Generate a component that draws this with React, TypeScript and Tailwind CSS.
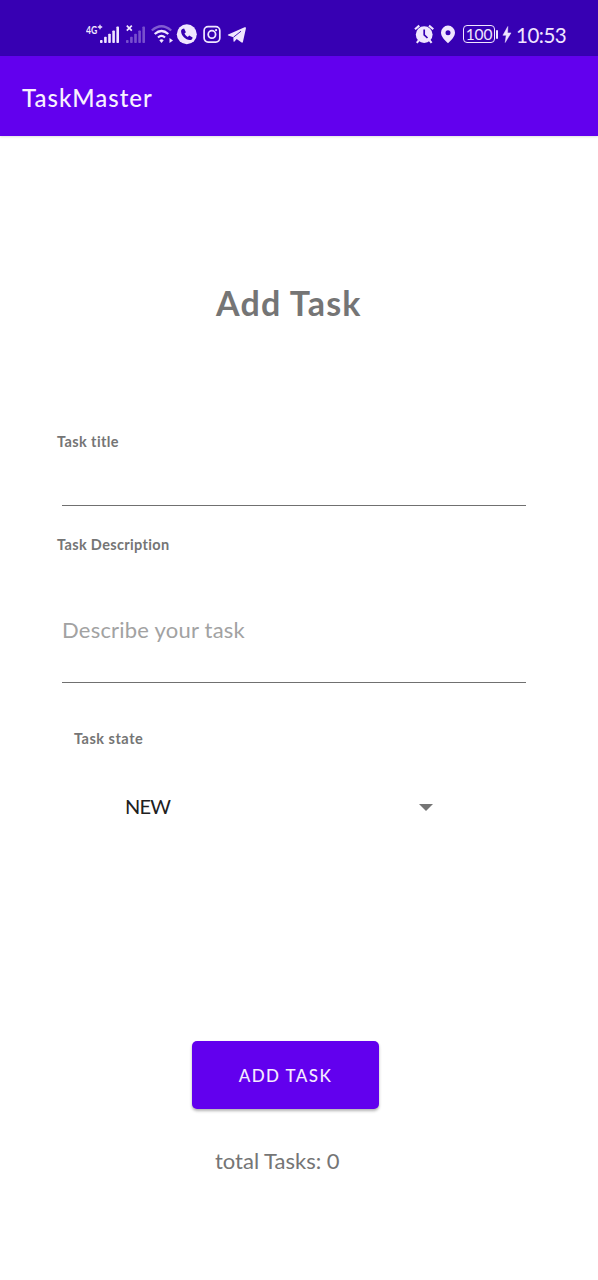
import React from 'react';

const ink = '#f0e6ff';

function SignalBars({ dim }: { dim?: boolean }) {
  return (
    <g fill={ink} opacity={dim ? 0.35 : 1}>
      <rect x="0" y="14" width="2.6" height="3" rx="0.8" />
      <rect x="4.1" y="10.5" width="2.6" height="6.5" rx="0.8" />
      <rect x="8.2" y="7.5" width="2.6" height="9.5" rx="0.8" />
      <rect x="12.3" y="4" width="2.6" height="13" rx="0.8" />
      <rect x="16.4" y="0" width="2.6" height="17" rx="0.8" />
    </g>
  );
}

function StatusBar() {
  return (
    <div className="flex h-14 w-full shrink-0 bg-[#3700b3] pt-[22px]">
      <div className="ml-[86px] flex h-6 w-[33px] shrink-0">
        <span className="h-3 w-[12px] shrink-0 origin-left scale-x-[0.82] pt-[2px] text-[10.5px] leading-[12px] font-bold whitespace-nowrap text-[#f0e6ff]">4G</span>
        <svg className="-ml-[12px] h-6 w-[33px] shrink-0" viewBox="0 0 33 24">
          <path d="M11.8 5h4.4M14 2.8v4.4" stroke={ink} strokeWidth="1.3" />
          <g transform="translate(14 4.5) scale(1 0.97)"><SignalBars /></g>
        </svg>
      </div>
      <svg className="ml-[6px] h-6 w-[21px] shrink-0" viewBox="0 0 21 24">
        <path d="M1.8 3.6l5 5M6.8 3.6l-5 5" stroke={ink} strokeWidth="1.7" />
        <g transform="translate(1 4.5) scale(1 0.97)"><SignalBars dim /></g>
      </svg>
      <svg className="ml-[4px] h-6 w-[25px] shrink-0" viewBox="0 0 25 24" fill="none">
        <path d="M1.8 8.5Q11.5 0 21.2 8.5" stroke={ink} strokeWidth="2.3" opacity="0.4" />
        <path d="M4.7 12Q11.5 6 18.3 12" stroke={ink} strokeWidth="2.2" />
        <path d="M8 15.5Q11.5 12.4 15 15.5" stroke={ink} strokeWidth="2.2" />
        <path d="M9.3 18.2Q11.5 16.4 13.7 18.2L11.5 21z" fill={ink} />
        <path d="M19.5 16v5l3.5-2.500z" fill={ink} />
      </svg>
      <svg className="h-6 w-[22px] shrink-0" viewBox="0 0 22 24">
        <circle cx="11.800" cy="12.3" r="10" fill={ink} />
        <path d="M7.4 7.1l1.7-.5 1.8 3.6-1.4 1.3c.7 1.6 1.8 2.7 3.3 3.5l1.4-1.4 3.4 1.9c-.2 1.8-1.4 2.7-2.8 2.6-4.400-.4-8.300-4.400-8.700-8.400-.1-1.200.4-2.100 1.300-2.600z" fill="#3700b3" />
      </svg>
      <svg className="ml-[6px] h-6 w-[18px] shrink-0" viewBox="0 0 18 24" fill="none" stroke={ink}>
        <rect x="1.1" y="4.7" width="15.7" height="15.4" rx="4" strokeWidth="1.7" />
        <circle cx="8.9" cy="12.4" r="3.7" strokeWidth="1.8" />
        <circle cx="13.1" cy="8.2" r="1.1" fill={ink} stroke="none" />
      </svg>
      <svg className="ml-[6px] h-6 w-[20px] shrink-0" viewBox="0 0 20 24">
        <path d="M1.2 12.600L17.600 5.300Q19.300 4.700 18.900 6.600L15.900 19.900Q15.500 21.200 14.200 20.300L9.700 17.100 7.500 19.500Q6.600 20.200 6.500 18.900L6.300 15.300 1.200 13.600Q.2 13.100 1.200 12.600z" fill={ink} />
        <path d="M6.500 15.200L14 9.200" stroke="#3700b3" strokeWidth="0.9" fill="none" />
      </svg>
      <svg className="ml-[167px] h-6 w-[20px] shrink-0" viewBox="0 0 20 24" fill="none">
        <circle cx="10.200" cy="12.600" r="8.400" fill={ink} />
        <path d="M1 7.300L5.300 3.600M19.300 7.300L15 3.600M4.800 18.400l-2 2.400M15.600 18.400l2 2.400" stroke={ink} strokeWidth="2.100" />
        <path d="M10.200 7.600v5.200l3.300 3.200" stroke="#3700b3" strokeWidth="1.700" />
      </svg>
      <svg className="ml-[6px] h-6 w-[16px] shrink-0" viewBox="0 0 16 24">
        <path fillRule="evenodd" d="M8 3.600a7 7 0 0 1 7 7c0 4-3.500 7.500-7 10.700C4.500 18.100 1 14.600 1 10.600a7 7 0 0 1 7-7zm0 4.700a2.500 2.500 0 1 0 0 5 2.500 2.500 0 0 0 0-5z" fill={ink} />
      </svg>
      <div className="mt-[3px] ml-[7px] flex h-[18px] w-[32px] shrink-0 items-center justify-center rounded-[4px] border-[1.5px] border-[#f0e6ff] text-[15.5px] leading-[15px] tracking-[-0.2px] text-[#f0e6ff]">
        100
      </div>
      <div className="mt-[8px] ml-[1px] h-[9px] w-[2px] shrink-0 rounded-sm bg-[#f0e6ff]" />
      <svg className="ml-[4px] h-6 w-[10px] shrink-0" viewBox="0 0 10 24">
        <path d="M5.800 4.500L.9 13.300h3.300L3.200 20.500 9 10.900H5.600z" fill={ink} stroke={ink} strokeWidth="0.500" />
      </svg>
      <span className="ml-[4px] h-6 text-[20.500px] leading-[27px] tracking-[-0.5px] whitespace-nowrap text-[#f0e6ff]">10:53</span>
    </div>
  );
}

export default function App() {
  return (
    <div className="flex h-[1280px] w-[598px] flex-col overflow-hidden bg-white font-[Lato,sans-serif] text-[#757575]">
      <StatusBar />
      <header className="flex h-20 w-full shrink-0 items-center bg-[#6200ee] pl-[22px] shadow-[0_1px_2px_rgba(0,0,0,0.12)]">
        <h1 className="pt-[3px] text-[24px] leading-8 font-medium tracking-[1px] whitespace-nowrap text-[#f8f0ff]">TaskMaster</h1>
      </header>
      <main className="flex flex-col items-start">
        <h2 className="mt-[147px] ml-[216px] text-[34px] leading-[40px] font-bold tracking-[1.2px] whitespace-nowrap">Add Task</h2>
        <label className="mt-[109px] ml-[57px] text-[14.5px] leading-5 font-bold tracking-[0.4px] whitespace-nowrap">Task title</label>
        <div className="mt-[53px] ml-[62px] h-px w-[464px] bg-[#707070]" />
        <label className="mt-[29px] ml-[57px] text-[14.5px] leading-5 font-bold tracking-[0.35px] whitespace-nowrap">Task Description</label>
        <div className="mt-[60px] ml-[62px] flex h-[68px] w-[464px] items-start border-b border-[#707070]">
          <span className="text-[22px] leading-[30px] tracking-[0.22px] whitespace-nowrap text-[#a2a2a2]">Describe your task</span>
        </div>
        <label className="mt-[46px] ml-[74px] text-[14.5px] leading-5 font-bold tracking-[0.5px] whitespace-nowrap">Task state</label>
        <div className="mt-[42px] ml-[125px] flex h-8 w-[308px] items-center justify-between">
          <span className="-mt-[2px] text-[20px] leading-8 tracking-[-0.8px] whitespace-nowrap text-[#202020]">NEW</span>
          <svg className="h-[7px] w-[14px]" viewBox="0 0 14 7"><path d="M0 0h14L7 7z" fill="#757575" /></svg>
        </div>
        <button className="mt-[218px] ml-[192px] flex h-[68px] w-[187px] items-center justify-center rounded-[5px] bg-[#6200ee] pt-px text-[17px] leading-6 font-medium tracking-[1.4px] whitespace-nowrap text-[#f4eaff] shadow-[0_2px_3px_rgba(0,0,0,0.3)]">ADD TASK</button>
        <p className="mt-[36px] ml-[215px] text-[22px] leading-8 whitespace-nowrap">total Tasks: 0</p>
      </main>
    </div>
  );
}
